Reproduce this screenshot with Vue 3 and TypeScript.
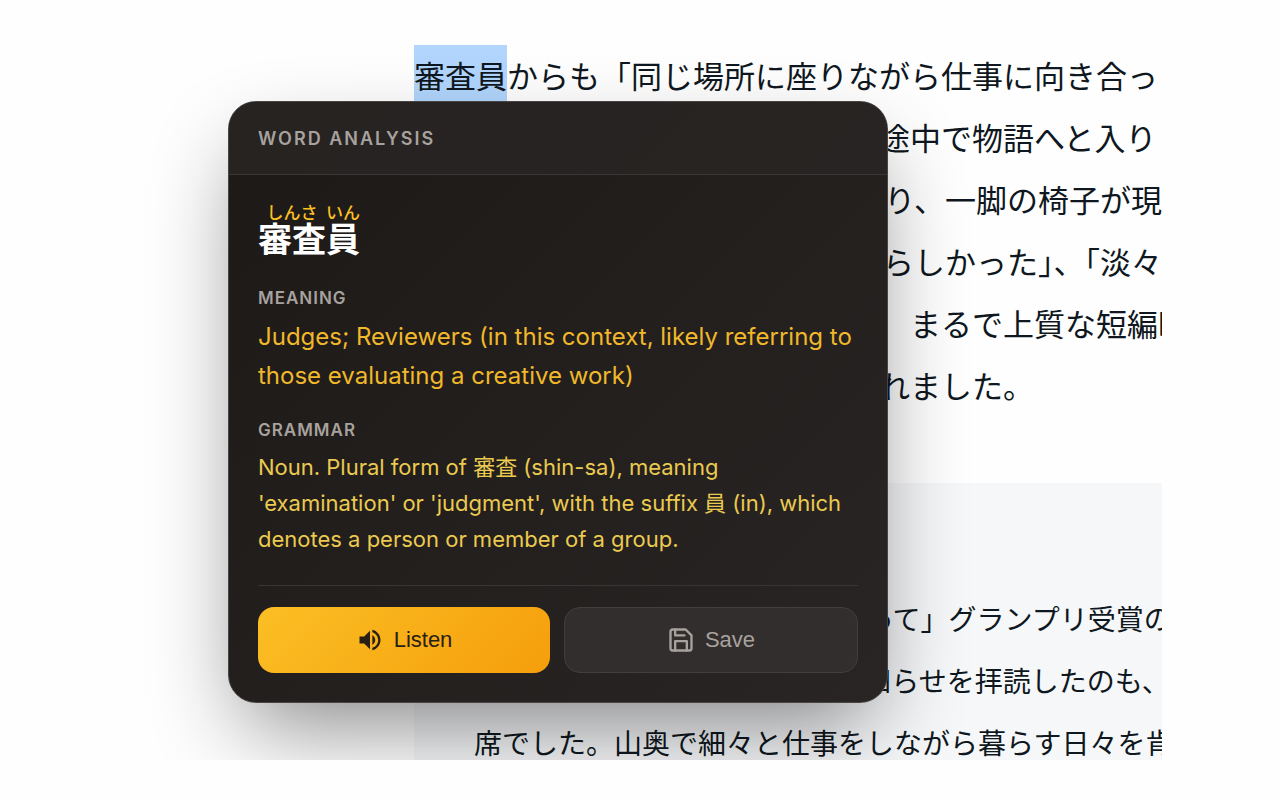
<script setup lang="ts">
interface Line {
  text: string
  end?: boolean
}

interface RubyPart {
  base: string
  reading: string
}

const selected = '審査員'

const bodyLines: Line[] = [
  { text: 'ている」という作品は、観る者が途中で物語へと入り' },
  { text: '込んでいくような構成になっており、一脚の椅子が現', end: true },
  { text: 'れる。その姿がとても静かですばらしかった」、「淡々', end: true },
  { text: 'と進む時間が静かに心地よく続き　まるで上質な短編映' },
  { text: '画のような作品だと心から感じられました。' },
]

const quoteLines: string[] = [
  'この度は第一回「椅子に向き合って」グランプリ受賞の',
  '作品の発表を待って、受賞のお知らせを拝読したのも、',
  '席でした。山奥で細々と仕事をしながら暮らす日々を肯',
]

const word: RubyPart[] = [
  { base: '審査', reading: 'しんさ' },
  { base: '員', reading: 'いん' },
]
</script>

<template>
  <main class="stage">
    <div class="scene">
      <article class="article" lang="ja">
        <p class="passage">
          <span class="line"><mark class="selection">{{ selected }}</mark>からも「同じ場所に座りながら仕事に向き合っ</span>
          <span v-for="line in bodyLines" :key="line.text" class="line" :class="{ end: line.end }">{{ line.text }}</span>
        </p>
        <blockquote class="quote">
          <span v-for="line in quoteLines" :key="line" class="line">{{ line }}</span>
        </blockquote>
      </article>

      <section class="popup" aria-labelledby="popup-title">
        <header class="popup-header">
          <h2 id="popup-title" class="popup-title">WORD ANALYSIS</h2>
        </header>
        <div class="popup-body">
          <p class="word" lang="ja">
            <ruby v-for="part in word" :key="part.base">{{ part.base }}<rt>{{ part.reading }}</rt></ruby>
          </p>
          <h3 class="label">MEANING</h3>
          <p class="meaning">Judges; Reviewers (in this context, likely referring to those evaluating a creative work)</p>
          <h3 class="label">GRAMMAR</h3>
          <p class="grammar">Noun. Plural form of 審査 (shin-sa), meaning 'examination' or 'judgment', with the suffix 員 (in), which denotes a person or member of a group.</p>
          <div class="actions">
            <button type="button" class="button listen">
              <svg class="icon" viewBox="0 0 24 24" fill="currentColor" aria-hidden="true">
                <path d="M3 9v6h4l5 5V4L7 9H3zm13.5 3c0-1.77-1.02-3.29-2.5-4.03v8.05c1.48-.73 2.5-2.25 2.5-4.02zM14 3.23v2.06c2.89.86 5 3.54 5 6.71s-2.11 5.85-5 6.71v2.06c4.01-.91 7-4.49 7-8.77s-2.99-7.86-7-8.77z" />
              </svg>
              Listen
            </button>
            <button type="button" class="button save">
              <svg class="icon" viewBox="0 0 24 24" fill="none" stroke="currentColor" stroke-width="2" stroke-linecap="round" stroke-linejoin="round" aria-hidden="true">
                <path d="M19 21H5a2 2 0 0 1-2-2V5a2 2 0 0 1 2-2h11l5 5v11a2 2 0 0 1-2 2z" />
                <path d="M17 21v-8H7v8M7 3v5h8" />
              </svg>
              Save
            </button>
          </div>
        </div>
      </section>
    </div>
  </main>
</template>

<style>
body {
  margin: 0;
  background: #fefefe;
}
</style>

<style scoped>
.stage {
  box-sizing: border-box;
  display: flex;
  height: 100vh;
  padding: 40px 118px;
}

.scene {
  position: relative;
  flex: 1;
  min-width: 0;
  overflow: hidden;
  background: #fefefe;
}

.article {
  margin-left: 296px;
  padding-top: 4px;
  color: #0f1720;
  font-family: "Noto Sans CJK JP", sans-serif;
}

.passage {
  margin: 0;
  font-size: 31px;
  line-height: 62px;
}

.line {
  display: block;
  white-space: nowrap;
}

.end {
  display: flex;
  justify-content: flex-end;
}

.selection {
  padding: 7px 0 12px;
  background: #b1d5fd;
  color: inherit;
}

.quote {
  margin: 67px 0 0;
  padding: 104px 0 40px 60px;
  background: #f6f7f9;
  font-size: 28px;
  line-height: 62px;
}

.popup {
  position: absolute;
  top: 61px;
  left: 110px;
  box-sizing: border-box;
  width: 660px;
  overflow: hidden;
  border: 1px solid #494544;
  border-radius: 28px;
  background: linear-gradient(135deg, #1c1917, #292524);
  box-shadow: 0 38px 90px -17px rgba(0, 0, 0, 0.48);
  font-family: Inter, "Noto Sans CJK JP", sans-serif;
}

.popup-header {
  padding: 23px 29px 21px;
  border-bottom: 1px solid #3a3736;
  background: rgba(41, 37, 36, 0.8);
}

.popup-title,
.label {
  margin: 0;
  color: #a8a29e;
  font-weight: 600;
}

.popup-title {
  font-size: 18px;
  line-height: 28px;
  letter-spacing: 2px;
}

.popup-body {
  padding: 29px;
}

.word {
  margin: 0 0 31px;
  color: #ffffff;
  font-family: "Noto Sans CJK JP", sans-serif;
  font-size: 34px;
  font-weight: 700;
  line-height: 34px;
}

.word ruby {
  ruby-align: center;
}

.word rt {
  color: #fbbf24;
  font-size: 17px;
  font-weight: 500;
  line-height: 20px;
}

.label {
  font-size: 17px;
  line-height: 24px;
  letter-spacing: 1px;
}

.meaning {
  margin: 7px 0 23px;
  color: #f0b82a;
  font-size: 24px;
  line-height: 39px;
}

.grammar {
  margin: 7px 0 0;
  color: #ebca50;
  font-size: 22px;
  line-height: 36px;
}

.actions {
  display: flex;
  gap: 14px;
  margin-top: 28px;
  padding-top: 21px;
  border-top: 1px solid #393534;
}

.button {
  display: flex;
  flex: 1;
  align-items: center;
  justify-content: center;
  gap: 10px;
  height: 66px;
  padding: 0;
  border: 0;
  border-radius: 16px;
  font-family: "Liberation Sans", Arial, sans-serif;
  font-size: 22px;
  cursor: pointer;
}

.listen {
  background: linear-gradient(135deg, #fbbf24, #f59e0b);
  color: #292015;
}

.save {
  border: 1px solid #423e3d;
  background: #322e2d;
  color: #a8a29e;
}

.icon {
  width: 28px;
  height: 28px;
}
</style>
